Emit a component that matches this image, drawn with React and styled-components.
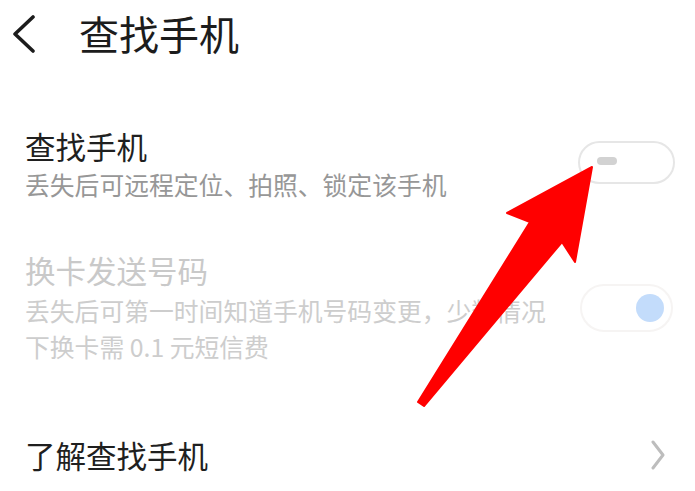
import React from "react";
import styled, { createGlobalStyle } from "styled-components";

const Global = createGlobalStyle`
  html, body { margin: 0; padding: 0; background: #ffffff; }
  body { font-family: "Noto Sans CJK SC", "Noto Sans", sans-serif; }
`;

const Page = styled.div`
  position: relative;
  width: 695px;
  height: 491px;
  overflow: hidden;
  background: #ffffff;
`;

const Header = styled.header`
  display: flex;
  align-items: center;
  height: 65px;
  padding-left: 11px;
`;

const BackButton = styled.button`
  display: flex;
  align-items: center;
  justify-content: center;
  width: 28px;
  height: 40px;
  padding: 0;
  border: 0;
  background: none;
  margin-right: 40px;
`;

const HeaderTitle = styled.h1`
  margin: 0;
  font-size: 40px;
  line-height: 50px;
  font-weight: 400;
  color: #1c1c1c;
`;

const List = styled.main`
  display: flex;
  flex-direction: column;
  padding: 63px 20px 0 25px;
`;

const Row = styled.div`
  display: flex;
  align-items: center;
  justify-content: space-between;
  margin-top: ${(p) => p.$gap || 0}px;
`;

const TextCol = styled.div`
  display: flex;
  flex-direction: column;
  max-width: 530px;
`;

const Title = styled.div`
  font-size: 30.5px;
  line-height: 36px;
  color: ${(p) => (p.$disabled ? "#c9c9c9" : "#1f1f1f")};
`;

const Sub = styled.div`
  font-size: 24.8px;
  line-height: 36px;
  margin-top: ${(p) => p.$mt || 2}px;
  color: ${(p) => (p.$disabled ? "#cdcdcd" : "#979797")};
`;

const Toggle = styled.div`
  box-sizing: border-box;
  display: flex;
  align-items: center;
  width: ${(p) => (p.$on ? 93 : 97)}px;
  height: ${(p) => (p.$on ? 48 : 43)}px;
  border-radius: 30px;
  border: 2px solid ${(p) => (p.$on ? "#f6f4f3" : "#e6e6e6")};
  justify-content: ${(p) => (p.$on ? "flex-end" : "flex-start")};
  padding: ${(p) => (p.$on ? "0 7px 0 0" : "0 0 0 17px")};
  margin-bottom: ${(p) => p.$mb || 0}px;
  margin-right: ${(p) => p.$mr || 0}px;
`;

const OffKnob = styled.span`
  width: 20px;
  height: 8px;
  border-radius: 4px;
  background: #d2d2d2;
  margin-top: -3px;
`;

const OnKnob = styled.span`
  width: 28px;
  height: 28px;
  border-radius: 50%;
  background: #c3dcfb;
`;

const LinkRow = styled(Row)`
  padding-right: 10px;
`;

const ArrowOverlay = styled.svg`
  position: absolute;
  left: 0;
  top: 0;
  pointer-events: none;
`;

export default function App() {
  return (
    <Page>
      <Global />
      <Header>
        <BackButton aria-label="back">
          <svg width="28" height="40" viewBox="0 0 28 40">
            <path d="M22 4 L4 21 L22 38" fill="none" stroke="#1c1c1c" strokeWidth="3.6" strokeLinecap="round" strokeLinejoin="round" />
          </svg>
        </BackButton>
        <HeaderTitle>查找手机</HeaderTitle>
      </Header>
      <List>
        <Row>
          <TextCol>
            <Title>查找手机</Title>
            <Sub>丢失后可远程定位、拍照、锁定该手机</Sub>
          </TextCol>
          <Toggle $mb={6} $mr={0}>
            <OffKnob />
          </Toggle>
        </Row>
        <Row $gap={50}>
          <TextCol>
            <Title $disabled>换卡发送号码</Title>
            <Sub $disabled $mt={4}>丢失后可第一时间知道手机号码变更，少数情况下换卡需 0.1 元短信费</Sub>
          </TextCol>
          <Toggle $on $mr={2}>
            <OnKnob />
          </Toggle>
        </Row>
        <LinkRow $gap={73}>
          <Title>了解查找手机</Title>
          <svg width="14" height="30" viewBox="0 0 14 30">
            <path d="M2 2 L12 15 L2 28" fill="none" stroke="#bdbdbd" strokeWidth="3" strokeLinecap="round" strokeLinejoin="round" />
          </svg>
        </LinkRow>
      </List>
      <ArrowOverlay width="695" height="491" viewBox="0 0 695 491">
        <polygon
          points="592,167 575,262 562,242 424,406 418,402 530,222 507,213"
          fill="#ff0000"
          stroke="#ff0000"
          strokeWidth="2"
          strokeLinejoin="round"
        />
      </ArrowOverlay>
    </Page>
  );
}
